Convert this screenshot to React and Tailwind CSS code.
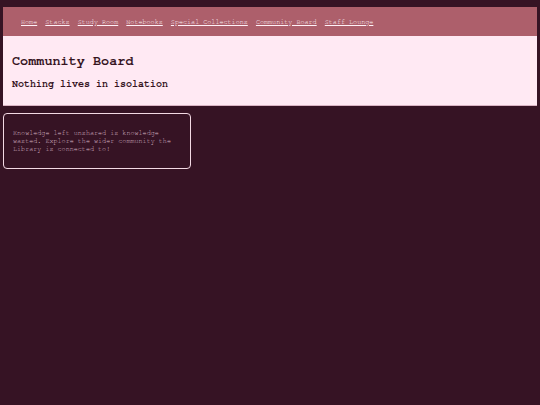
const links = ['Home', 'Stacks', 'Study Room', 'Notebooks', 'Special Collections', 'Community Board', 'Staff Lounge'];

export default function App() {
  return (
    <div className="min-h-[405px] bg-[#361324] px-[3px] pt-[7px] font-['Nimbus_Mono_PS','FreeMono','Nimbus_Mono_L','Liberation_Mono',monospace]">
      <nav className="h-[29px] bg-[#ad5f6b] flex items-center gap-[8.1px] pl-[18px]">
        {links.map((l) => (
          <a key={l} href="#" className="text-[6.75px] leading-[8px] text-[#fff2f8] underline">
            {l}
          </a>
        ))}
      </nav>
      <header className="bg-[#ffe9f3] border-b border-[#d9b3c3] pt-[17px] pb-[15px] px-[9px] w-[534px]">
        <h1 className="text-[13.5px] leading-[16px] font-bold text-[#36141f]">Community Board</h1>
        <h2 className="mt-[9px] text-[10px] leading-[12px] font-bold text-[#36141f]">Nothing lives in isolation</h2>
      </header>
      <div className="mt-[7px] w-[188px] rounded-[4px] border-[1.5px] border-[#f3d9e4] px-[9px] py-[15px]">
        <p className="text-[6.75px] leading-[8px] text-[#dcbac9]">
          Knowledge left unshared is knowledge wasted. Explore the wider community the Library is connected to!
        </p>
      </div>
    </div>
  );
}
